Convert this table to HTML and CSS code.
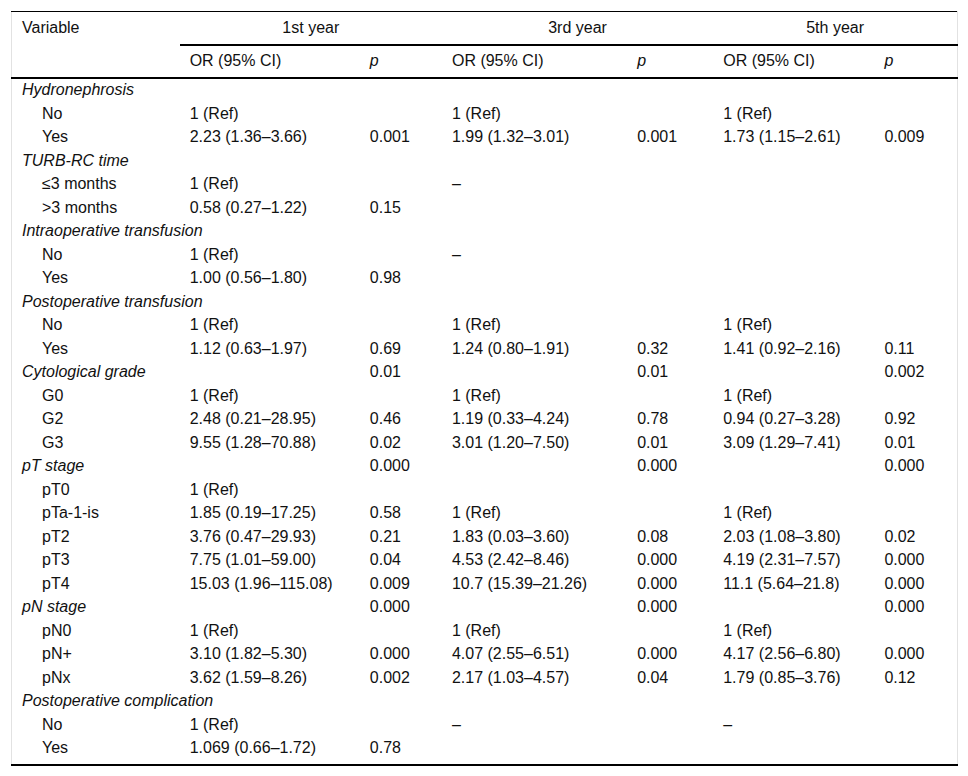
FILE: index.html
```html
<!DOCTYPE html>
<html>
<head>
<meta charset="utf-8">
<link rel="stylesheet" href="styles.css">
</head>
<body>
<div class="wrap">
<table class="tbl">
<colgroup>
<col class="c-var"><col class="c-or1"><col class="c-p1"><col class="c-or3"><col class="c-p3"><col class="c-or5"><col class="c-p5">
</colgroup>
<thead>
<tr class="h1">
<th class="var" rowspan="2">Variable</th>
<th class="yr" colspan="2">1st year</th>
<th class="yr" colspan="2">3rd year</th>
<th class="yr" colspan="2">5th year</th>
</tr>
<tr class="h2">
<th>OR (95% CI)</th><th><i>p</i></th>
<th>OR (95% CI)</th><th><i>p</i></th>
<th>OR (95% CI)</th><th><i>p</i></th>
</tr>
</thead>
<tbody>
<tr><td class="cat" colspan="7">Hydronephrosis</td></tr>
<tr><td class="sub">No</td><td>1 (Ref)</td><td></td><td>1 (Ref)</td><td></td><td>1 (Ref)</td><td></td></tr>
<tr><td class="sub">Yes</td><td>2.23 (1.36–3.66)</td><td>0.001</td><td>1.99 (1.32–3.01)</td><td>0.001</td><td>1.73 (1.15–2.61)</td><td>0.009</td></tr>
<tr><td class="cat" colspan="7">TURB-RC time</td></tr>
<tr><td class="sub">≤3 months</td><td>1 (Ref)</td><td></td><td>–</td><td></td><td></td><td></td></tr>
<tr><td class="sub">&gt;3 months</td><td>0.58 (0.27–1.22)</td><td>0.15</td><td></td><td></td><td></td><td></td></tr>
<tr><td class="cat" colspan="7">Intraoperative transfusion</td></tr>
<tr><td class="sub">No</td><td>1 (Ref)</td><td></td><td>–</td><td></td><td></td><td></td></tr>
<tr><td class="sub">Yes</td><td>1.00 (0.56–1.80)</td><td>0.98</td><td></td><td></td><td></td><td></td></tr>
<tr><td class="cat" colspan="7">Postoperative transfusion</td></tr>
<tr><td class="sub">No</td><td>1 (Ref)</td><td></td><td>1 (Ref)</td><td></td><td>1 (Ref)</td><td></td></tr>
<tr><td class="sub">Yes</td><td>1.12 (0.63–1.97)</td><td>0.69</td><td>1.24 (0.80–1.91)</td><td>0.32</td><td>1.41 (0.92–2.16)</td><td>0.11</td></tr>
<tr><td class="cat">Cytological grade</td><td></td><td>0.01</td><td></td><td>0.01</td><td></td><td>0.002</td></tr>
<tr><td class="sub">G0</td><td>1 (Ref)</td><td></td><td>1 (Ref)</td><td></td><td>1 (Ref)</td><td></td></tr>
<tr><td class="sub">G2</td><td>2.48 (0.21–28.95)</td><td>0.46</td><td>1.19 (0.33–4.24)</td><td>0.78</td><td>0.94 (0.27–3.28)</td><td>0.92</td></tr>
<tr><td class="sub">G3</td><td>9.55 (1.28–70.88)</td><td>0.02</td><td>3.01 (1.20–7.50)</td><td>0.01</td><td>3.09 (1.29–7.41)</td><td>0.01</td></tr>
<tr><td class="cat">pT stage</td><td></td><td>0.000</td><td></td><td>0.000</td><td></td><td>0.000</td></tr>
<tr><td class="sub">pT0</td><td>1 (Ref)</td><td></td><td></td><td></td><td></td><td></td></tr>
<tr><td class="sub">pTa-1-is</td><td>1.85 (0.19–17.25)</td><td>0.58</td><td>1 (Ref)</td><td></td><td>1 (Ref)</td><td></td></tr>
<tr><td class="sub">pT2</td><td>3.76 (0.47–29.93)</td><td>0.21</td><td>1.83 (0.03–3.60)</td><td>0.08</td><td>2.03 (1.08–3.80)</td><td>0.02</td></tr>
<tr><td class="sub">pT3</td><td>7.75 (1.01–59.00)</td><td>0.04</td><td>4.53 (2.42–8.46)</td><td>0.000</td><td>4.19 (2.31–7.57)</td><td>0.000</td></tr>
<tr><td class="sub">pT4</td><td>15.03 (1.96–115.08)</td><td>0.009</td><td>10.7 (15.39–21.26)</td><td>0.000</td><td>11.1 (5.64–21.8)</td><td>0.000</td></tr>
<tr><td class="cat">pN stage</td><td></td><td>0.000</td><td></td><td>0.000</td><td></td><td>0.000</td></tr>
<tr><td class="sub">pN0</td><td>1 (Ref)</td><td></td><td>1 (Ref)</td><td></td><td>1 (Ref)</td><td></td></tr>
<tr><td class="sub">pN+</td><td>3.10 (1.82–5.30)</td><td>0.000</td><td>4.07 (2.55–6.51)</td><td>0.000</td><td>4.17 (2.56–6.80)</td><td>0.000</td></tr>
<tr><td class="sub">pNx</td><td>3.62 (1.59–8.26)</td><td>0.002</td><td>2.17 (1.03–4.57)</td><td>0.04</td><td>1.79 (0.85–3.76)</td><td>0.12</td></tr>
<tr><td class="cat" colspan="7">Postoperative complication</td></tr>
<tr><td class="sub">No</td><td>1 (Ref)</td><td></td><td>–</td><td></td><td>–</td><td></td></tr>
<tr class="last"><td class="sub">Yes</td><td>1.069 (0.66–1.72)</td><td>0.78</td><td></td><td></td><td></td><td></td></tr>
</tbody>
</table>
</div>
</body>
</html>
```
FILE: styles.css
```css
html, body {
  margin: 0;
  padding: 0;
  background: #fff;
}
.wrap {
  padding: 11px 0 0 11px;
}
.tbl {
  border-collapse: collapse;
  table-layout: fixed;
  width: 947px;
  font-family: "Liberation Sans", Arial, sans-serif;
  font-size: 16px;
  color: #111;
  border-top: 1px solid #000;
  border-bottom: 2px solid #000;
  border-left: 1px solid #e2e2e2;
  border-right: 1px solid #e2e2e2;
}
.c-var { width: 168px; }
.c-or1 { width: 180px; }
.c-p1 { width: 82px; }
.c-or3 { width: 185px; }
.c-p3 { width: 86px; }
.c-or5 { width: 161px; }
.c-p5 { width: 83px; }
th {
  font-weight: normal;
  text-align: left;
  vertical-align: top;
  padding: 6px 10px 7px 10px;
  line-height: 18.5px;
}
.h1 th {
  padding-top: 7px;
  padding-bottom: 6px;
}
.h1 th.yr {
  text-align: center;
  border-bottom: 2px solid #000;
}
.h2 th {
  border-bottom: 2px solid #000;
}
th.var {
  border-bottom: 2px solid #000;
}
td {
  padding: 2.5px 10px;
  line-height: 18.5px;
  white-space: nowrap;
  vertical-align: top;
}
td.cat {
  font-style: italic;
}
td.sub {
  padding-left: 30px;
}
tr:first-child td {
  padding-top: 2px;
}
tr.last td {
  padding-bottom: 6px;
}
```
